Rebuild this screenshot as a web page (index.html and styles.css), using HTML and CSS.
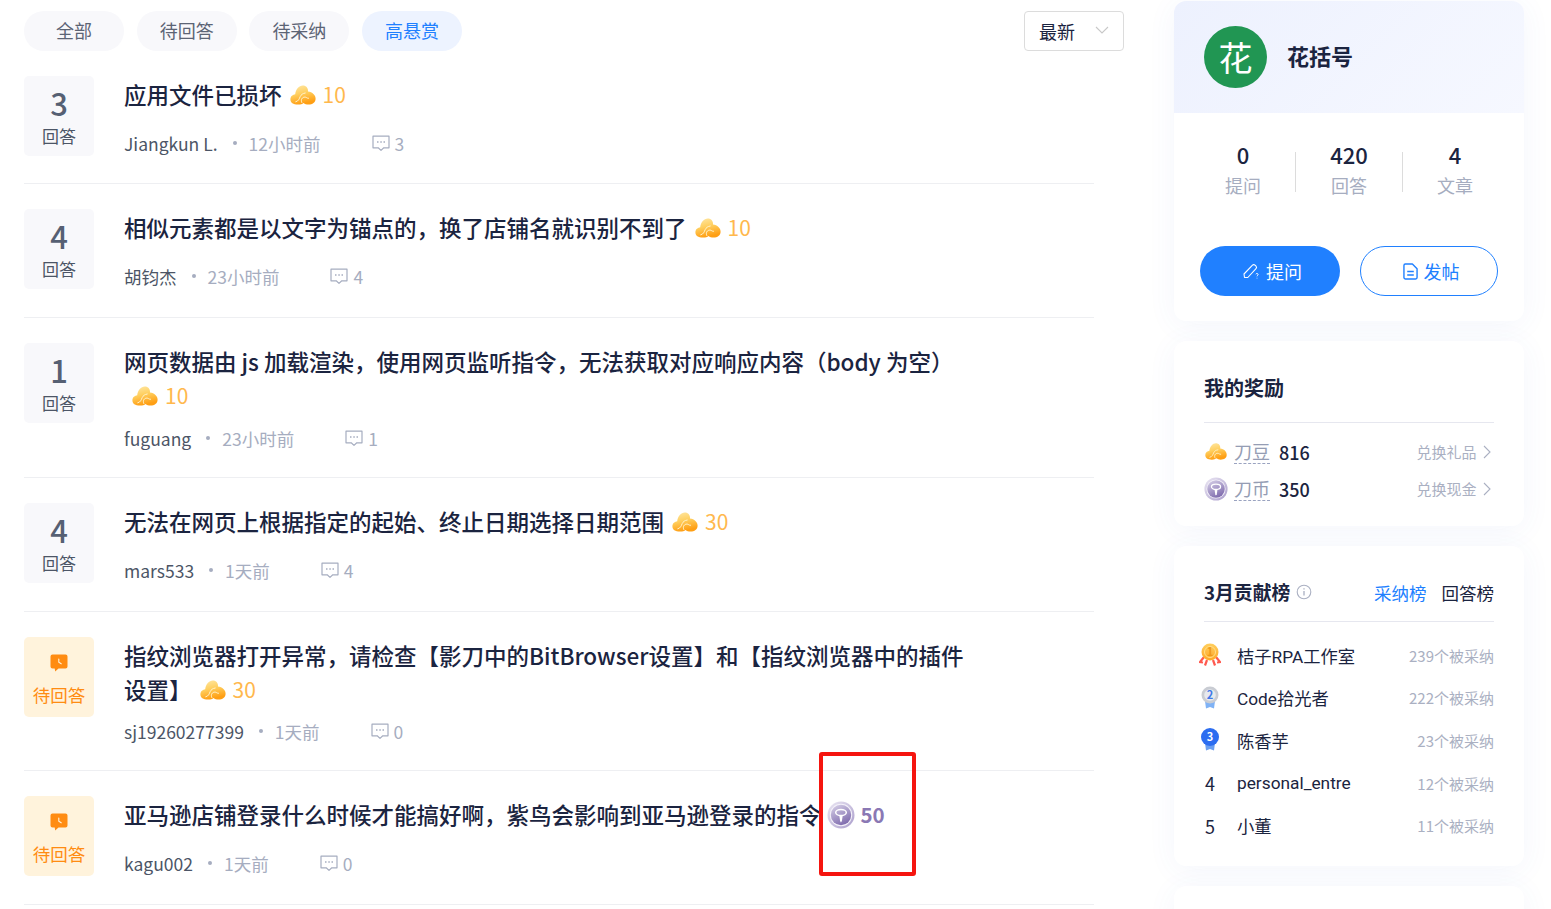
FILE: index.html
```html
<!DOCTYPE html>
<html lang="zh-CN">
<head>
    <meta charset="UTF-8">
    <meta name="viewport" content="width=device-width, initial-scale=1.0">
    <title>问答社区</title>
    <link rel="stylesheet" href="styles.css">
</head>
<body>
    <svg class="icon-defs" xmlns="http://www.w3.org/2000/svg">
        <defs>
            <linearGradient id="beanFill" x1="0" y1="0" x2="0.3" y2="1">
                <stop offset="0" stop-color="#ffe9a8"/>
                <stop offset="0.5" stop-color="#ffcf5f"/>
                <stop offset="1" stop-color="#ff9f14"/>
            </linearGradient>
            <linearGradient id="coinRing" x1="0" y1="0" x2="1" y2="1">
                <stop offset="0" stop-color="#ece8f4"/>
                <stop offset="1" stop-color="#a99ccb"/>
            </linearGradient>
            <linearGradient id="coinFace" x1="0" y1="0" x2="0.5" y2="1">
                <stop offset="0" stop-color="#d9d3e9"/>
                <stop offset="1" stop-color="#8370b0"/>
            </linearGradient>
            <linearGradient id="goldFace" x1="0" y1="0" x2="0" y2="1">
                <stop offset="0" stop-color="#ffcf5e"/>
                <stop offset="1" stop-color="#ffa726"/>
            </linearGradient>
        </defs>
        <symbol id="bean" viewBox="0 0 26 20">
            <g fill="url(#beanFill)">
                <path d="M.4 14.200C.4 11 3 9.600 5.200 9.200 5.800 4.200 9 .4 12.800.4c3.400 0 5.600 2.600 5.200 6.200 4.400.4 7.600 3.600 7.600 7.200 0 3.800-3.200 5.800-7 5.800-2.200 0-3.800-.6-5-1.600-1.400 1-3 1.600-5.400 1.600C3 19.600.4 17.600.4 14.200z"/>
            </g>
            <path fill="none" stroke="#fff4cf" stroke-width="1" stroke-linecap="round" d="M5.800 16.800c2.800-.6 3.400-3 4.400-5.200 1-2 2.400-3.200 5-3.600M11.800 17.500c-1.400-2.800.4-5.600 3.400-5.400 1.300.1 1.700 1.300 3.300 1.200"/>
        </symbol>
        <symbol id="coin" viewBox="0 0 28 28">
            <circle cx="14" cy="14" r="13.500" fill="url(#coinRing)"/>
            <circle cx="14" cy="14" r="11.200" fill="#f4f1f9"/>
            <circle cx="14" cy="14" r="10.200" fill="url(#coinFace)"/>
            <ellipse cx="14" cy="11.500" rx="5.300" ry="3.100" fill="none" stroke="#fff" stroke-width="1.500"/>
            <path fill="#fff" d="M12.300 14.500h3.400l-.8 5.500-1 1.500-.8-1.500z"/>
        </symbol>
        <symbol id="comment" viewBox="0 0 18 17">
            <path fill="none" stroke="#a6adc0" stroke-width="1.200" stroke-linejoin="round" d="M1 1.200h16v11.600h-5.200L9 15.400l-2.800-2.600H1z"/>
            <path fill="#a6adc0" d="M5 6.300h1.500v1.500H5zM8.300 6.300h1.500v1.500H8.300zM11.500 6.300H13v1.500h-1.500z"/>
        </symbol>
        <symbol id="waiting" viewBox="0 0 18 18">
            <path fill="#ff8c12" d="M2.500.5h13A2 2 0 0 1 17.500 2.500v10a2 2 0 0 1-2 2H8.500L5.200 17.500l-.5-3H2.500a2 2 0 0 1-2-2v-10a2 2 0 0 1 2-2z"/>
            <path fill="none" stroke="#fff3dc" stroke-width="1.100" stroke-linecap="round" d="M8.800 5v3.200l2.400 1.600"/>
        </symbol>
    </svg>

    <div class="page">
        <main class="main">
            <div class="filter-row">
                <div class="filters">
                    <a class="pill">全部</a>
                    <a class="pill">待回答</a>
                    <a class="pill">待采纳</a>
                    <a class="pill active">高悬赏</a>
                </div>
                <div class="sort-select">
                    <span>最新</span>
                    <svg class="chevron" viewBox="0 0 14 8"><path d="M1 1l6 6 6-6" fill="none" stroke="#c8c8c8" stroke-width="1.100"/></svg>
                </div>
            </div>

            <div class="question-list">
                <div class="question">
                    <div class="count-box"><strong>3</strong><span>回答</span></div>
                    <div class="question-body">
                        <h3 class="question-title">应用文件已损坏<span class="reward"><svg class="bean-icon"><use href="#bean"/></svg>10</span></h3>
                        <div class="meta"><span class="author">Jiangkun L.</span><i class="dot"></i><span class="time">12小时前</span><svg class="comment-icon"><use href="#comment"/></svg><span class="time">3</span></div>
                    </div>
                </div>
                <div class="question">
                    <div class="count-box"><strong>4</strong><span>回答</span></div>
                    <div class="question-body">
                        <h3 class="question-title">相似元素都是以文字为锚点的，换了店铺名就识别不到了<span class="reward"><svg class="bean-icon"><use href="#bean"/></svg>10</span></h3>
                        <div class="meta"><span class="author">胡钧杰</span><i class="dot"></i><span class="time">23小时前</span><svg class="comment-icon"><use href="#comment"/></svg><span class="time">4</span></div>
                    </div>
                </div>
                <div class="question">
                    <div class="count-box"><strong>1</strong><span>回答</span></div>
                    <div class="question-body">
                        <h3 class="question-title">网页数据由 js 加载渲染，使用网页监听指令，无法获取对应响应内容（body 为空）<span class="reward"><svg class="bean-icon"><use href="#bean"/></svg>10</span></h3>
                        <div class="meta"><span class="author">fuguang</span><i class="dot"></i><span class="time">23小时前</span><svg class="comment-icon"><use href="#comment"/></svg><span class="time">1</span></div>
                    </div>
                </div>
                <div class="question">
                    <div class="count-box"><strong>4</strong><span>回答</span></div>
                    <div class="question-body">
                        <h3 class="question-title">无法在网页上根据指定的起始、终止日期选择日期范围<span class="reward"><svg class="bean-icon"><use href="#bean"/></svg>30</span></h3>
                        <div class="meta"><span class="author">mars533</span><i class="dot"></i><span class="time">1天前</span><svg class="comment-icon"><use href="#comment"/></svg><span class="time">4</span></div>
                    </div>
                </div>
                <div class="question">
                    <div class="count-box pending"><svg class="waiting-icon"><use href="#waiting"/></svg><span>待回答</span></div>
                    <div class="question-body">
                        <h3 class="question-title">指纹浏览器打开异常，请检查【影刀中的BitBrowser设置】和【指纹浏览器中的插件设置】<span class="reward"><svg class="bean-icon"><use href="#bean"/></svg>30</span></h3>
                        <div class="meta tight"><span class="author">sj19260277399</span><i class="dot"></i><span class="time">1天前</span><svg class="comment-icon"><use href="#comment"/></svg><span class="time">0</span></div>
                    </div>
                </div>
                <div class="question">
                    <div class="count-box pending"><svg class="waiting-icon"><use href="#waiting"/></svg><span>待回答</span></div>
                    <div class="question-body">
                        <h3 class="question-title">亚马逊店铺登录什么时候才能搞好啊，紫鸟会影响到亚马逊登录的指令<span class="reward purple"><svg class="coin-icon"><use href="#coin"/></svg>50</span></h3>
                        <div class="meta"><span class="author">kagu002</span><i class="dot"></i><span class="time">1天前</span><svg class="comment-icon"><use href="#comment"/></svg><span class="time">0</span></div>
                    </div>
                </div>
            </div>
        </main>

        <aside class="sidebar">
            <div class="card profile-card">
                <div class="profile-head">
                    <div class="avatar">花</div>
                    <div class="profile-name">花括号</div>
                </div>
                <div class="stats">
                    <div class="stat"><strong>0</strong><span>提问</span></div>
                    <div class="stat"><strong>420</strong><span>回答</span></div>
                    <div class="stat"><strong>4</strong><span>文章</span></div>
                </div>
                <div class="profile-actions">
                    <a class="btn btn-primary">
                        <svg class="btn-icon" viewBox="0 0 18 18"><path d="M2.500 15.500l-.5-3.500L10.500 3.200a1.800 1.800 0 0 1 2.500 0l1 1a1.800 1.800 0 0 1 0 2.500L5.800 15.500z" fill="none" stroke="#fff" stroke-width="1.100" stroke-linejoin="round"/><path d="M13.800 12.200c.3-1 2.300-.9 2.300.3 0 .9-1.100 1-1.100 1.800M15 15.800v.6" fill="none" stroke="#fff" stroke-width="1"/></svg>
                        提问
                    </a>
                    <a class="btn btn-outline">
                        <svg class="btn-icon doc" viewBox="0 0 16 18"><path d="M2.500 1h7.500l5 5v9.500a1.500 1.500 0 0 1-1.500 1.500h-11A1.500 1.500 0 0 1 1 15.500v-13A1.500 1.500 0 0 1 2.500 1z" fill="none" stroke="#2080ff" stroke-width="1.500" stroke-linejoin="round"/><path d="M4.500 9h7M4.500 12.700h7" stroke="#2080ff" stroke-width="1.500"/></svg>
                        发帖
                    </a>
                </div>
            </div>

            <div class="card rewards-card">
                <h4 class="card-title">我的奖励</h4>
                <div class="reward-row">
                    <svg class="reward-icon bean-small"><use href="#bean"/></svg>
                    <span class="reward-name">刀豆</span>
                    <span class="reward-value">816</span>
                    <a class="reward-link">兑换礼品<svg class="link-arrow" viewBox="0 0 8 14"><path d="M1 1l6 6-6 6" fill="none" stroke="#aab0c2" stroke-width="1.100"/></svg></a>
                </div>
                <div class="reward-row">
                    <svg class="reward-icon"><use href="#coin"/></svg>
                    <span class="reward-name">刀币</span>
                    <span class="reward-value">350</span>
                    <a class="reward-link">兑换现金<svg class="link-arrow" viewBox="0 0 8 14"><path d="M1 1l6 6-6 6" fill="none" stroke="#aab0c2" stroke-width="1.100"/></svg></a>
                </div>
            </div>

            <div class="card rank-card">
                <div class="rank-head">
                    <h4 class="card-title small">3月贡献榜</h4>
                    <svg class="info-icon" viewBox="0 0 16 16"><circle cx="8" cy="8" r="6.800" fill="none" stroke="#aab0c2" stroke-width="1.100"/><path d="M8 7v4.500M8 4.300v1.300" stroke="#aab0c2" stroke-width="1.300"/></svg>
                    <div class="rank-tabs"><a class="active">采纳榜</a><a>回答榜</a></div>
                </div>
                <div class="rank-row">
                    <span class="rank-no">
                        <svg class="medal" viewBox="0 0 22 24"><path d="M5 14l-4 5 3 .5M17 14l4 5-3 .5M8 17l-2 5.500M14 17l2 5.500" fill="none" stroke="#ff5a4f" stroke-width="2.200"/><circle cx="11" cy="9" r="8.500" fill="url(#goldFace)"/><circle cx="11" cy="9" r="5.500" fill="none" stroke="#ffdf8a" stroke-width="1"/><text x="11" y="12.500" text-anchor="middle" class="medal-text gold">1</text></svg>
                    </span>
                    <span class="rank-name">桔子RPA工作室</span>
                    <span class="rank-count">239个被采纳</span>
                </div>
                <div class="rank-row">
                    <span class="rank-no">
                        <svg class="medal" viewBox="0 0 22 24"><path d="M6 15h10l-1 7.500-4-1.500-4 1.500z" fill="#7fb2f5"/><circle cx="11" cy="9" r="8.500" fill="#c9ccd3"/><circle cx="11" cy="9" r="5.800" fill="#e7e9ee"/><text x="11" y="13" text-anchor="middle" class="medal-text silver">2</text></svg>
                    </span>
                    <span class="rank-name">Code拾光者</span>
                    <span class="rank-count">222个被采纳</span>
                </div>
                <div class="rank-row">
                    <span class="rank-no">
                        <svg class="medal" viewBox="0 0 22 24"><path d="M6 15h10l-1 7.500-4-1.500-4 1.500z" fill="#6b9ff0"/><circle cx="11" cy="9" r="9" fill="#2c6df0"/><text x="11" y="13" text-anchor="middle" class="medal-text white">3</text></svg>
                    </span>
                    <span class="rank-name">陈香芋</span>
                    <span class="rank-count">23个被采纳</span>
                </div>
                <div class="rank-row">
                    <span class="rank-no">4</span>
                    <span class="rank-name">personal_entre</span>
                    <span class="rank-count">12个被采纳</span>
                </div>
                <div class="rank-row">
                    <span class="rank-no">5</span>
                    <span class="rank-name">小董</span>
                    <span class="rank-count">11个被采纳</span>
                </div>
            </div>

            <div class="card empty-card"></div>
        </aside>
    </div>

    <div class="highlight-box"></div>
</body>
</html>
```

FILE: styles.css
```css
html, body {
    height: 909px;
    overflow: hidden;
}
body {
    margin: 0;
    background-color: white;
    font-family: "Noto Sans CJK SC", "Noto Sans", sans-serif;
    font-size: 18px;
    color: #1b2440;
    position: relative;
}
a {
    cursor: pointer;
}
.icon-defs {
    position: absolute;
    width: 0;
    height: 0;
}
.page {
    display: flex;
    align-items: flex-start;
    padding-left: 24px;
}
.main {
    width: 1100px;
    flex-shrink: 0;
}

/* filters */
.filter-row {
    display: flex;
    justify-content: space-between;
    padding-top: 11px;
}
.filters {
    display: flex;
    gap: 12.7px;
}
.pill {
    width: 100px;
    height: 40px;
    line-height: 39px;
    text-align: center;
    border-radius: 20px;
    background-color: #f8f8fb;
    color: #5c6475;
}
.pill.active {
    background-color: #edf3ff;
    color: #2080ff;
}
.sort-select {
    width: 100px;
    height: 40px;
    box-sizing: border-box;
    border: 1px solid #dcdcdc;
    border-radius: 4px;
    display: flex;
    align-items: center;
    justify-content: space-between;
    padding: 0 14px;
}
.chevron {
    width: 14px;
    height: 8px;
    margin-top: -3px;
}

/* question list */
.question-list {
    width: 1070px;
}
.question {
    display: flex;
    gap: 30px;
    padding: 25px 0 26px;
    border-bottom: 1px solid #eeeff2;
}
.question:first-child {
    padding-bottom: 25px;
}
.count-box {
    width: 70px;
    height: 80px;
    flex-shrink: 0;
    border-radius: 5px;
    background-color: #f8f8fb;
    color: #4c5566;
    display: flex;
    flex-direction: column;
    align-items: center;
    font-size: 17px;
    line-height: 24px;
}
.count-box strong {
    font-size: 31px;
    font-weight: 500;
    line-height: 40px;
    margin-top: 8px;
    position: relative;
    top: -1px;
    color: #566073;
}
.count-box.pending {
    background-color: #fff3dc;
    color: #ff8c12;
    font-size: 17.5px;
}
.waiting-icon {
    width: 18px;
    height: 18px;
    margin-top: 17px;
    margin-bottom: 11px;
}
.question-body {
    min-height: 82px;
}
.question-title {
    margin: 1px 0 0;
    box-sizing: border-box;
    max-width: 850px;
    min-height: 41px;
    padding-bottom: 1px;
    font-size: 22.5px;
    font-weight: 500;
    line-height: 34px;
    color: #1b2440;
}
.reward {
    display: inline-flex;
    align-items: center;
    margin-left: 8px;
    margin-top: 1px;
    vertical-align: top;
    font-size: 21px;
    font-weight: 400;
    line-height: 33px;
    color: #ffb84d;
}
.reward.purple {
    margin-left: 5px;
    font-size: 20.5px;
    font-weight: 700;
    color: #8a78b4;
}
.bean-icon {
    width: 26px;
    height: 20px;
    margin-right: 7px;
}
.coin-icon {
    width: 28px;
    height: 28px;
    margin-right: 6px;
}
.meta {
    display: flex;
    align-items: center;
    height: 26px;
    margin-top: 12px;
    font-size: 17.5px;
    color: #4c5566;
}
.meta.tight {
    margin-top: 11px;
}
.dot {
    width: 4px;
    height: 4px;
    border-radius: 50%;
    background-color: #a6adc0;
    margin: 0 12px 0 15px;
}
.time {
    color: #a6adc0;
}
.comment-icon {
    width: 18px;
    height: 17px;
    margin-left: 51px;
    margin-right: 5px;
}

/* sidebar */
.sidebar {
    width: 350px;
    margin-left: 50px;
    padding-top: 1px;
    display: flex;
    flex-direction: column;
    gap: 20px;
    flex-shrink: 0;
}
.card {
    background-color: white;
    border-radius: 12px;
    box-shadow: 0 4px 30px rgba(70, 100, 200, 0.06);
}
.profile-card {
    height: 320px;
    overflow: hidden;
}
.profile-head {
    height: 112px;
    box-sizing: border-box;
    padding: 25px 30px 0;
    background: linear-gradient(135deg, #edf1fe, #f6f8ff);
    display: flex;
    gap: 20px;
}
.avatar {
    width: 63px;
    height: 62px;
    border-radius: 50%;
    background-color: #219653;
    color: white;
    font-size: 34px;
    line-height: 62px;
    text-align: center;
}
.profile-name {
    font-size: 22px;
    font-weight: 700;
    line-height: 59px;
}
.stats {
    display: flex;
    padding: 24px 16px 0;
}
.stat {
    flex: 1;
    display: flex;
    flex-direction: column;
    align-items: center;
    position: relative;
}
.stat + .stat::before {
    content: "";
    position: absolute;
    left: -1px;
    top: 15px;
    height: 40px;
    width: 1px;
    background-color: #dcdcdc;
}
.stat:last-child::before {
    left: 0;
}
.stat strong {
    font-size: 22px;
    font-weight: 500;
    line-height: 34px;
}
.stat span {
    color: #a6adc0;
    line-height: 27px;
    padding-top: 1px;
}
.profile-actions {
    display: flex;
    gap: 20px;
    padding: 47px 26px 0;
}
.btn {
    height: 50px;
    box-sizing: border-box;
    border-radius: 25px;
    display: flex;
    align-items: center;
    justify-content: center;
    gap: 6px;
    padding-left: 4px;
}
.btn-primary {
    width: 140px;
    background-color: #2080ff;
    color: white;
}
.btn-outline {
    width: 138px;
    border: 1px solid #2080ff;
    color: #2080ff;
}
.btn-icon {
    width: 18px;
    height: 18px;
}
.btn-icon.doc {
    width: 15px;
    height: 17px;
}
.card-title {
    margin: 0;
    font-size: 20px;
    font-weight: 700;
    line-height: 30px;
    color: #1b2440;
}
.card-title.small {
    font-size: 18.8px;
}
.rewards-card {
    height: 185px;
    box-sizing: border-box;
    padding: 32px 30px 0;
}
.rewards-card .card-title {
    padding-bottom: 19px;
    border-bottom: 1px solid #e6e7ef;
    margin-bottom: 10px;
}
.reward-row {
    display: flex;
    align-items: center;
    height: 37px;
}
.reward-icon {
    width: 24px;
    height: 24px;
    margin-right: 6px;
}
.reward-icon.bean-small {
    height: 17px;
}
.reward-name {
    color: #959db4;
    border-bottom: 1px dashed #9aa3c0;
    line-height: 23px;
    margin-right: 9px;
}
.reward-value {
    font-weight: 500;
}
.reward-link {
    margin-left: auto;
    display: flex;
    align-items: center;
    gap: 6px;
    padding-right: 3.500px;
    font-size: 15px;
    color: #aab0c2;
}
.link-arrow {
    width: 8px;
    height: 14px;
}
.rank-card {
    height: 320px;
    box-sizing: border-box;
    padding: 31px 30px 0;
}
.rank-head {
    display: flex;
    align-items: center;
    height: 30px;
    padding-bottom: 14px;
    border-bottom: 1px solid #e6e7ef;
    margin-bottom: 12px;
}
.info-icon {
    width: 16px;
    height: 16px;
    margin-left: 6px;
}
.rank-tabs {
    margin-left: auto;
    display: flex;
    gap: 15px;
    font-size: 17.5px;
}
.rank-tabs .active {
    color: #2080ff;
}
.rank-row {
    display: flex;
    align-items: center;
    height: 42.6px;
}
.rank-no {
    width: 24px;
    margin-left: -6px;
    margin-right: 15px;
    display: flex;
    justify-content: center;
}
.rank-name {
    font-family: Roboto, "Noto Sans CJK SC", sans-serif;
    font-size: 17.3px;
}
.medal {
    width: 22px;
    height: 24px;
    flex-shrink: 0;
}
.medal-text {
    font-size: 11px;
    font-weight: 700;
}
.medal-text.gold {
    fill: #f09a1a;
}
.medal-text.silver {
    fill: #3f78e8;
}
.medal-text.white {
    fill: white;
}
.rank-count {
    margin-left: auto;
    font-size: 15px;
    color: #aab0c2;
}
.empty-card {
    height: 200px;
}

/* red annotation from the original screenshot */
.highlight-box {
    position: absolute;
    left: 819px;
    top: 752px;
    width: 97px;
    height: 124px;
    box-sizing: border-box;
    border: 4px solid #f5150f;
    border-radius: 3px;
}
```
